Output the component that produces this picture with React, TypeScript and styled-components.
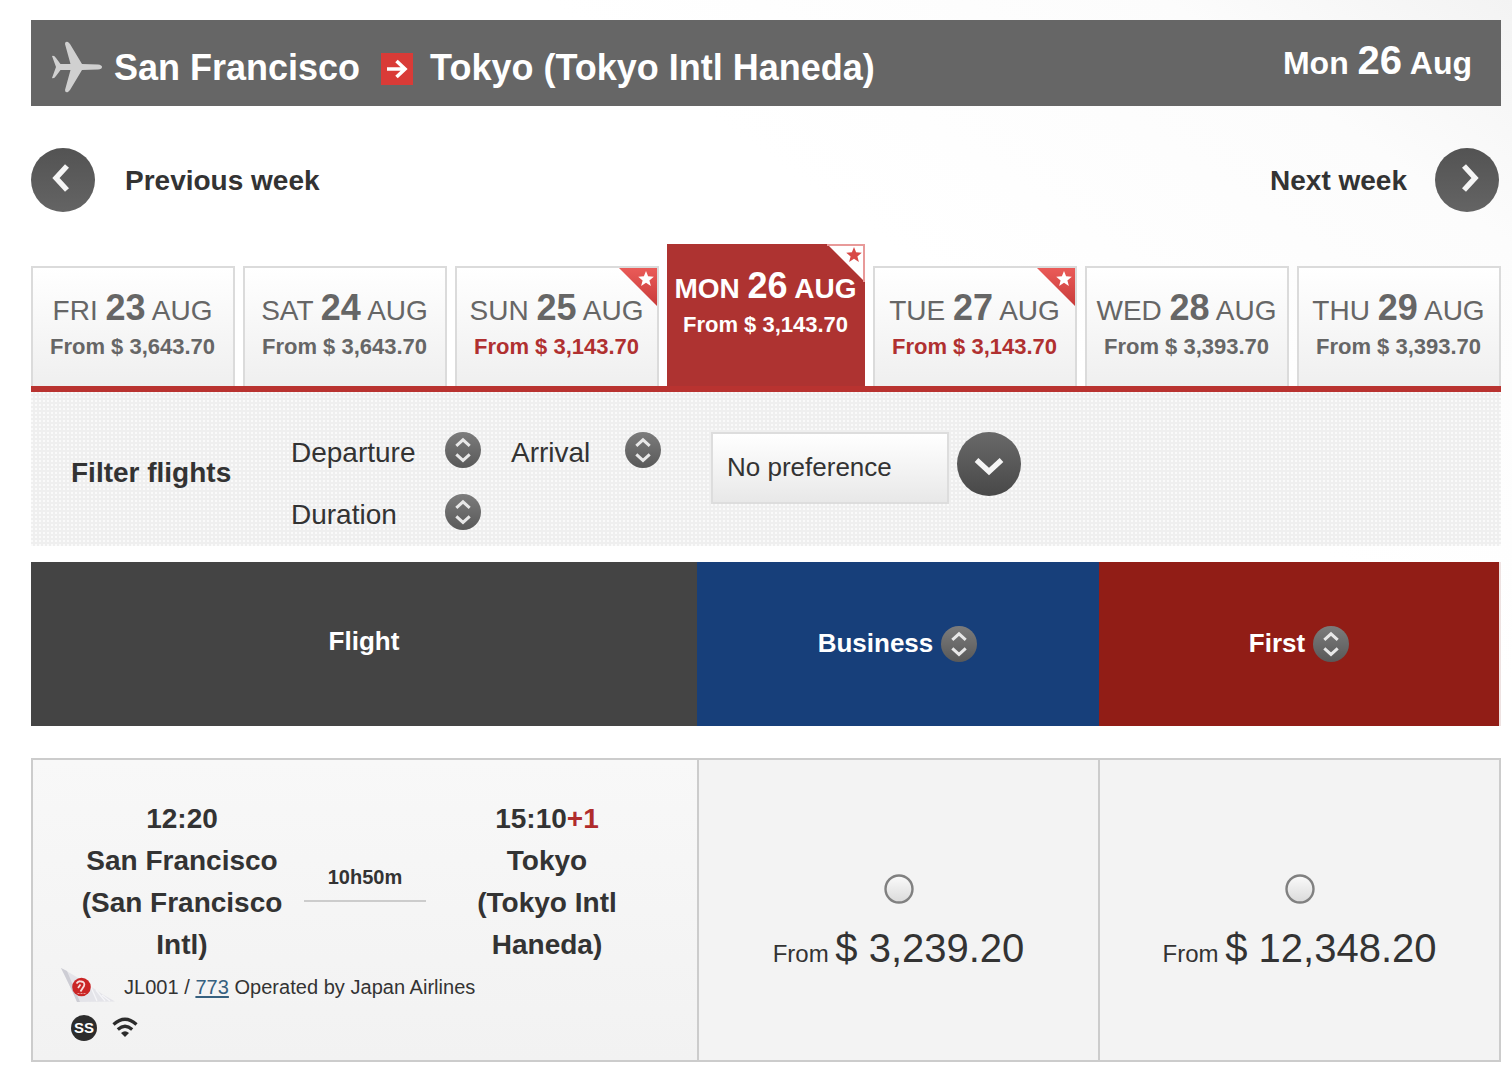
import React from 'react';
import styled, { createGlobalStyle, css } from 'styled-components';

const GlobalStyle = createGlobalStyle`
  * {
    box-sizing: border-box;
  }
  body {
    margin: 0;
    background: #fff linear-gradient(to bottom left, #f3f3f3 0, #fcfcfc 200px, #fff 560px) no-repeat;
    color: #333;
    font-family: 'Liberation Sans', Arial, Helvetica, sans-serif;
    font-size: 28px;
  }
`;

const Page = styled.main`
  width: 1512px;
  height: 1072px;
  padding: 20px 11px 0 31px;
  overflow: hidden;
`;

const RouteBar = styled.header`
  display: flex;
  align-items: flex-start;
  height: 86px;
  padding: 0 29px 0 20px;
  background: #666;
  color: #fff;
  font-weight: 700;
  white-space: nowrap;
`;

const PlaneIcon = styled.svg`
  width: 52px;
  height: 54px;
  margin: 20px 11px 0 0;
`;

const City = styled.span`
  font-size: 36px;
  line-height: 50px;
  margin-top: 23px;
`;

const ArrowIcon = styled.svg`
  width: 32px;
  height: 32px;
  margin: 33px 17px 0 21px;
`;

const RouteDate = styled.div`
  margin: 15px 0 0 auto;
  font-size: 32px;
  line-height: 50px;

  b {
    font-size: 40px;
  }
`;

const WeekNav = styled.nav`
  display: flex;
  justify-content: space-between;
  align-items: center;
  height: 64px;
  margin: 42px 2px 32px 0;
`;

const WeekLink = styled.div<{ $reverse?: boolean }>`
  display: flex;
  flex-direction: ${({ $reverse }) => ($reverse ? 'row-reverse' : 'row')};
  align-items: center;
  gap: ${({ $reverse }) => ($reverse ? 28 : 30)}px;
  font-weight: 700;

  span {
    padding-top: 2px;
  }
`;

const RoundIcon = styled.svg<{ $size: number }>`
  display: block;
  flex: none;
  width: ${({ $size }) => $size}px;
  height: ${({ $size }) => $size}px;
`;

const Tabs = styled.div`
  display: flex;
  align-items: flex-end;
  gap: 8px;
  height: 148px;
  border-bottom: 6px solid #b93330;
`;

const Tab = styled.div<{ $active?: boolean }>`
  position: relative;
  width: 204px;
  height: 120px;
  padding: 18px 1px 0 0;
  border: 2px solid #dbdbdb;
  border-bottom: 0;
  background: linear-gradient(#fff, #efefef);
  color: #666;
  text-align: center;
  white-space: nowrap;

  ${({ $active }) =>
    $active &&
    css`
      width: 198px;
      height: 142px;
      padding-top: 20px;
      border: 0;
      background: #ae3331;
      color: #fff;
      font-weight: 700;
    `}
`;

const TabDate = styled.div`
  height: 45px;
  line-height: 44px;

  b {
    font-size: 36px;
  }
`;

const TabPrice = styled.div<{ $low?: boolean }>`
  font-size: 22px;
  font-weight: 700;
  line-height: 32px;
  color: ${({ $low }) => ($low ? '#b03030' : 'inherit')};
`;

const CornerStar = styled.svg`
  position: absolute;
  top: 0;
  right: 0;
  width: 38px;
  height: 38px;
`;

const FilterBar = styled.section`
  display: flex;
  align-items: flex-start;
  height: 154px;
  padding: 40px 0 0 40px;
  background:
    repeating-linear-gradient(transparent 0 2px, #efefef 2px 4px),
    repeating-linear-gradient(90deg, #fafafa 0 2px, #efefef 2px 4px);
`;

const FilterTitle = styled.h2`
  width: 220px;
  margin: 20px 0 0;
  font-size: 28px;
  line-height: 42px;
`;

const SortGrid = styled.div`
  display: grid;
  grid-template-columns: 220px 200px;
  row-gap: 26px;
`;

const SortItem = styled.div<{ $label: number }>`
  display: grid;
  grid-template-columns: ${({ $label }) => $label}px 36px;
  height: 36px;
  line-height: 41px;
`;

const SelectBox = styled.div`
  width: 238px;
  height: 72px;
  margin-right: 8px;
  padding-left: 14px;
  border: 2px solid #ddd;
  background: linear-gradient(#fff, #e8e8e8);
  font-size: 26px;
  line-height: 67px;
`;

const CabinHeader = styled.div`
  display: grid;
  grid-template-columns: 666px 402px 402px;
  height: 164px;
  margin-top: 16px;
`;

const CabinCell = styled.div<{ $bg: string }>`
  display: flex;
  justify-content: center;
  align-items: center;
  gap: 8px;
  padding-right: 1px;
  background: ${({ $bg }) => $bg};
  color: #fff;
  font-size: 26px;
  font-weight: 700;

  span {
    padding-bottom: 2px;
  }
  &:first-child {
    padding: 0 0 4px;
  }
  &:last-child {
    padding-right: 0;
    border-right: 2px solid #eee2e1;
  }
`;

const FlightRow = styled.article`
  display: grid;
  grid-template-columns: 666px 401px 403px;
  height: 304px;
  margin-top: 32px;
  border: 2px solid #ccc;
  border-width: 2px 0;
`;

const FlightCell = styled.div`
  padding: 38px 0 0 30px;
  border-left: 2px solid #ccc;
  background: linear-gradient(#f8f8f8, #f2f2f2);
`;

const Journey = styled.div`
  display: grid;
  grid-template-columns: 238px 122px 236px;
  column-gap: 3px;
  height: 170px;
`;

const Stop = styled.div`
  font-weight: 700;
  line-height: 42px;
  text-align: center;

  em {
    color: #b02c2c;
    font-style: normal;
  }
`;

const Duration = styled.div`
  height: 104px;
  padding-top: 67px;
  border-bottom: 2px solid #ccc;
  font-size: 20px;
  font-weight: 700;
  line-height: 24px;
  text-align: center;
`;

const Carrier = styled.div`
  display: flex;
  align-items: center;
  height: 36px;
  font-size: 20px;
  white-space: pre;

  span {
    padding-top: 2px;
    letter-spacing: 0.03px;
  }
  u {
    color: #36607f;
    text-underline-offset: 2px;
  }
`;

const TailIcon = styled.svg`
  width: 56px;
  height: 36px;
  margin: 0 8px 2px -3px;
`;

const Services = styled.div`
  display: flex;
  align-items: center;
  gap: 14px;
  height: 28px;
  margin: 10px 0 0 8px;
`;

const SeatBadge = styled.span`
  width: 26px;
  height: 26px;
  border-radius: 50%;
  background: #2c2c2c;
  color: #fff;
  font-size: 15px;
  font-weight: 700;
  line-height: 26px;
  text-align: center;
`;

const FareCell = styled.div`
  display: flex;
  flex-direction: column;
  align-items: center;
  padding-top: 114px;
  border-left: 2px solid #ccc;
  background: #f3f3f3;

  &:last-child {
    border-right: 2px solid #ccc;
  }
`;

const Fare = styled.div`
  margin-top: 19px;
  font-size: 24px;
  line-height: 50px;
  white-space: nowrap;

  span {
    font-size: 40px;
  }
`;

const points = {
  left: '36,18 25,30 36,42',
  right: '29,18 40,30 29,42',
  down: '19.5,28 32,39.5 44.5,28',
};

const RoundArrow = ({ dir }: { dir: keyof typeof points }) => (
  <RoundIcon $size={64} viewBox="0 0 64 64">
    <defs>
      <linearGradient id={`round-${dir}`} x2="0" y2="1">
        <stop stopColor={dir === 'down' ? '#696969' : '#535353'} />
        <stop offset="1" stopColor={dir === 'down' ? '#484848' : '#646464'} />
      </linearGradient>
    </defs>
    <circle cx="32" cy="32" r="32" fill={`url(#round-${dir})`} />
    <polyline points={points[dir]} fill="none" stroke="#f5f5f5" strokeWidth="5.4" />
  </RoundIcon>
);

const SortIcon = () => (
  <RoundIcon $size={36} viewBox="0 0 36 36">
    <defs>
      <linearGradient id="sort" x2="0" y2="1">
        <stop stopColor="#7c7c7c" />
        <stop offset="1" stopColor="#595959" />
      </linearGradient>
    </defs>
    <circle cx="18" cy="18" r="18" fill="url(#sort)" />
    <path d="M11.3 13.8L18 7.8L24.7 13.8M11.3 22.4L18 28.4L24.7 22.4" fill="none" stroke="#e8e8e8" strokeWidth="3" />
  </RoundIcon>
);

const Star = ({ inverted }: { inverted?: boolean }) => (
  <CornerStar viewBox="0 0 38 38">
    <defs>
      <linearGradient id="corner" x2="0" y2="1">
        <stop stopColor="#ea5b58" />
        <stop offset="1" stopColor="#c83b3a" />
      </linearGradient>
    </defs>
    <path d="M0 0H38V38Z" fill={inverted ? '#fff' : 'url(#corner)'} />
    {inverted && <path d="M0 1H37V38" fill="none" stroke="#e89a99" strokeWidth="2" />}
    <path
      d="M27 3L29.1 8.3L34.8 8.7L30.4 12.4L31.9 18L27 14.8L22.1 18L23.6 12.4L19.2 8.7L24.9 8.3Z"
      fill={inverted ? '#d84845' : '#fff'}
    />
  </CornerStar>
);

const Plane = () => (
  <PlaneIcon viewBox="0 0 52 54">
    <path
      d="M1 16Q3 15 5 18L9.5 24H19.5L14 4Q14 1 17 2L19 4L31 24L47 24.5Q51 25 51 27Q51 29 47 29.5L31 30L19 50L17 52Q14 53 14 50L19.5 30H9.5L5 36Q3 39 1 38L5 27Z"
      fill="#d0d0d0"
    />
  </PlaneIcon>
);

const Tail = () => (
  <TailIcon viewBox="0 0 56 36">
    <path d="M1 1L15 9L42 27L55 34.5L17 35Q13 25 1 1Z" fill="#e4e4e9" />
    <path d="M1 1L7 4L20 35H17Q13 25 1 1Z" fill="#cdcdd4" />
    <path d="M30 18L37 34M36 23L45 34M42 28L50 34" stroke="#f5f5f8" strokeWidth="1.3" />
    <circle cx="21.5" cy="20" r="9.3" fill="#ca2626" />
    <path d="M16.5 16.5Q18.5 13.5 21 14.5Q25.5 15 24 19L20.5 24.5M20.5 17.5L18 21" fill="none" stroke="#f7dede" strokeWidth="1.8" />
    <path d="M17.5 26.5H25.5" stroke="#e89a99" strokeWidth="1" strokeDasharray="2 1" />
  </TailIcon>
);

const Wifi = () => (
  <svg width="28" height="24" viewBox="0 0 28 24">
    <path d="M2.5 8.5Q14 -2 25.5 8.5M6.8 13.5Q14 7 21.2 13.5" fill="none" stroke="#2c2c2c" strokeWidth="3.2" />
    <path d="M10 17Q14 13.5 18 17L14 21Z" fill="#2c2c2c" />
  </svg>
);

const Radio = () => (
  <svg width="30" height="30" viewBox="0 0 30 30">
    <defs>
      <linearGradient id="radio" x2="0" y2="1">
        <stop stopColor="#fbfbfb" />
        <stop offset="1" stopColor="#dadada" />
      </linearGradient>
    </defs>
    <circle cx="15" cy="15" r="13.5" fill="url(#radio)" stroke="#808080" strokeWidth="2.4" />
  </svg>
);

type Day = {
  day: string;
  date: number;
  price: string;
  low?: boolean;
  active?: boolean;
};

const days: Day[] = [
  { day: 'FRI', date: 23, price: '3,643.70' },
  { day: 'SAT', date: 24, price: '3,643.70' },
  { day: 'SUN', date: 25, price: '3,143.70', low: true },
  { day: 'MON', date: 26, price: '3,143.70', low: true, active: true },
  { day: 'TUE', date: 27, price: '3,143.70', low: true },
  { day: 'WED', date: 28, price: '3,393.70' },
  { day: 'THU', date: 29, price: '3,393.70' },
];

const sorts = [
  { label: 'Departure', width: 154 },
  { label: 'Arrival', width: 114 },
  { label: 'Duration', width: 154 },
];

const fares = ['3,239.20', '12,348.20'];

const App: React.FC = () => (
  <Page>
    <GlobalStyle />
    <RouteBar>
      <Plane />
      <City>San Francisco</City>
      <ArrowIcon viewBox="0 0 32 32">
        <path d="M0 0H32V32H0Z" fill="#d93b37" />
        <path d="M6 16H24M15.5 8L24 16L15.5 24" fill="none" stroke="#fff" strokeWidth="3.6" />
      </ArrowIcon>
      <City>Tokyo (Tokyo Intl Haneda)</City>
      <RouteDate>
        Mon <b>26</b> Aug
      </RouteDate>
    </RouteBar>

    <WeekNav>
      <WeekLink>
        <RoundArrow dir="left" />
        <span>Previous week</span>
      </WeekLink>
      <WeekLink $reverse>
        <RoundArrow dir="right" />
        <span>Next week</span>
      </WeekLink>
    </WeekNav>

    <Tabs>
      {days.map(({ day, date, price, low, active }) => (
        <Tab key={date} $active={active}>
          {low && <Star inverted={active} />}
          <TabDate>
            {day} <b>{date}</b> AUG
          </TabDate>
          <TabPrice $low={low && !active}>From $ {price}</TabPrice>
        </Tab>
      ))}
    </Tabs>

    <FilterBar>
      <FilterTitle>Filter flights</FilterTitle>
      <SortGrid>
        {sorts.map(({ label, width }) => (
          <SortItem key={label} $label={width}>
            {label}
            <SortIcon />
          </SortItem>
        ))}
      </SortGrid>
      <SelectBox>No preference</SelectBox>
      <RoundArrow dir="down" />
    </FilterBar>

    <CabinHeader>
      <CabinCell $bg="#444">
        <span>Flight</span>
      </CabinCell>
      <CabinCell $bg="#173f7a">
        <span>Business</span>
        <SortIcon />
      </CabinCell>
      <CabinCell $bg="#911d16">
        <span>First</span>
        <SortIcon />
      </CabinCell>
    </CabinHeader>

    <FlightRow>
      <FlightCell>
        <Journey>
          <Stop>
            12:20
            <br />
            San Francisco
            <br />
            (San Francisco
            <br />
            Intl)
          </Stop>
          <Duration>10h50m</Duration>
          <Stop>
            15:10<em>+1</em>
            <br />
            Tokyo
            <br />
            (Tokyo Intl
            <br />
            Haneda)
          </Stop>
        </Journey>
        <Carrier>
          <Tail />
          <span>
            JL001 / <u>773</u> Operated by Japan Airlines
          </span>
        </Carrier>
        <Services>
          <SeatBadge>SS</SeatBadge>
          <Wifi />
        </Services>
      </FlightCell>
      {fares.map((fare) => (
        <FareCell key={fare}>
          <Radio />
          <Fare>
            From <span>$ {fare}</span>
          </Fare>
        </FareCell>
      ))}
    </FlightRow>
  </Page>
);

export default App;
